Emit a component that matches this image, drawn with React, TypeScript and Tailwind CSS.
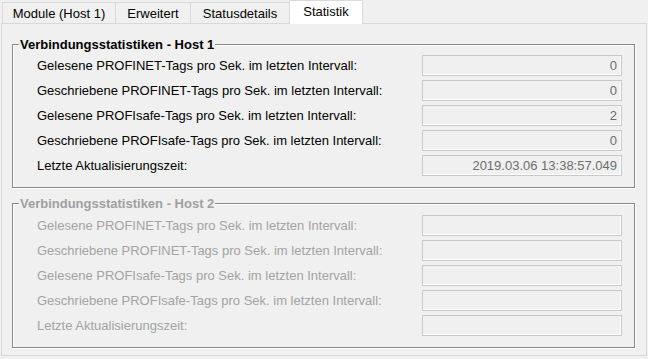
import React from "react";

const labels = [
  "Gelesene PROFINET-Tags pro Sek. im letzten Intervall:",
  "Geschriebene PROFINET-Tags pro Sek. im letzten Intervall:",
  "Gelesene PROFIsafe-Tags pro Sek. im letzten Intervall:",
  "Geschriebene PROFIsafe-Tags pro Sek. im letzten Intervall:",
  "Letzte Aktualisierungszeit:",
];

function Group({
  title,
  values,
  disabled,
  className,
}: {
  title: string;
  values: string[];
  disabled?: boolean;
  className: string;
}) {
  return (
    <div
      className={
        "relative w-[623px] border border-[#8a8a8a] shadow-[1px_1px_0_#ffffff,inset_1px_1px_0_#ffffff] pl-[24px] pr-[12px] flex flex-col gap-[4px] " +
        className
      }
    >
      <div
        className={
          "absolute top-[-8px] left-[6px] px-[1px] bg-[#f0f0f0] font-bold leading-[15px] " +
          (disabled ? "text-[#a0a0a0]" : "text-black")
        }
      >
        {title}
      </div>
      {labels.map((l, i) => (
        <div key={i} className="flex items-center justify-between h-[21px]">
          <span className={"leading-[15px] " + (disabled ? "text-[#a3a3a3]" : "text-black")}>{l}</span>
          <div className="w-[200px] h-[21px] border border-[#c8c8c8] shadow-[inset_-1px_-1px_0_#ffffff] flex items-center justify-end pr-[4px] text-[13px] text-[#6d6d6d] leading-[15px]">
            {values[i]}
          </div>
        </div>
      ))}
    </div>
  );
}

export default function App() {
  const tabs = [
    { t: "Module (Host 1)", w: "w-[114px]" },
    { t: "Erweitert", w: "w-[76px]" },
    { t: "Statusdetails", w: "w-[100px]" },
  ];
  return (
    <div className="w-[648px] h-[359px] bg-[#f0f0f0] font-['Liberation_Sans',Arial,sans-serif] text-[13px] text-black overflow-hidden">
      <div className="flex items-end h-[23px] pl-[2px] relative z-10">
        {tabs.map((t, i) => (
          <div
            key={i}
            className={
              "h-[21px] border-t border-l border-r border-[#d9d9d9] bg-[#f0f0f0] flex items-center justify-center leading-[15px] " +
              t.w +
              (i > 0 ? " -ml-px" : "")
            }
          >
            {t.t}
          </div>
        ))}
        <div className="relative z-10 -ml-px -mb-px w-[74px] h-[24px] border-t border-l border-r border-[#d9d9d9] bg-white flex items-center justify-center leading-[15px] pb-[2px]">
          Statistik
        </div>
      </div>
      <div className="ml-[1px] w-[646px] h-[333px] border border-[#d9d9d9] pl-[10px] pt-[20px]">
        <Group
          title="Verbindungsstatistiken - Host 1"
          values={["0", "0", "2", "0", "2019.03.06 13:38:57.049"]}
          className="h-[144px] pt-[10px]"
        />
        <Group
          title="Verbindungsstatistiken - Host 2"
          values={["", "", "", "", ""]}
          disabled
          className="h-[145px] pt-[11px] mt-[15px]"
        />
      </div>
    </div>
  );
}
